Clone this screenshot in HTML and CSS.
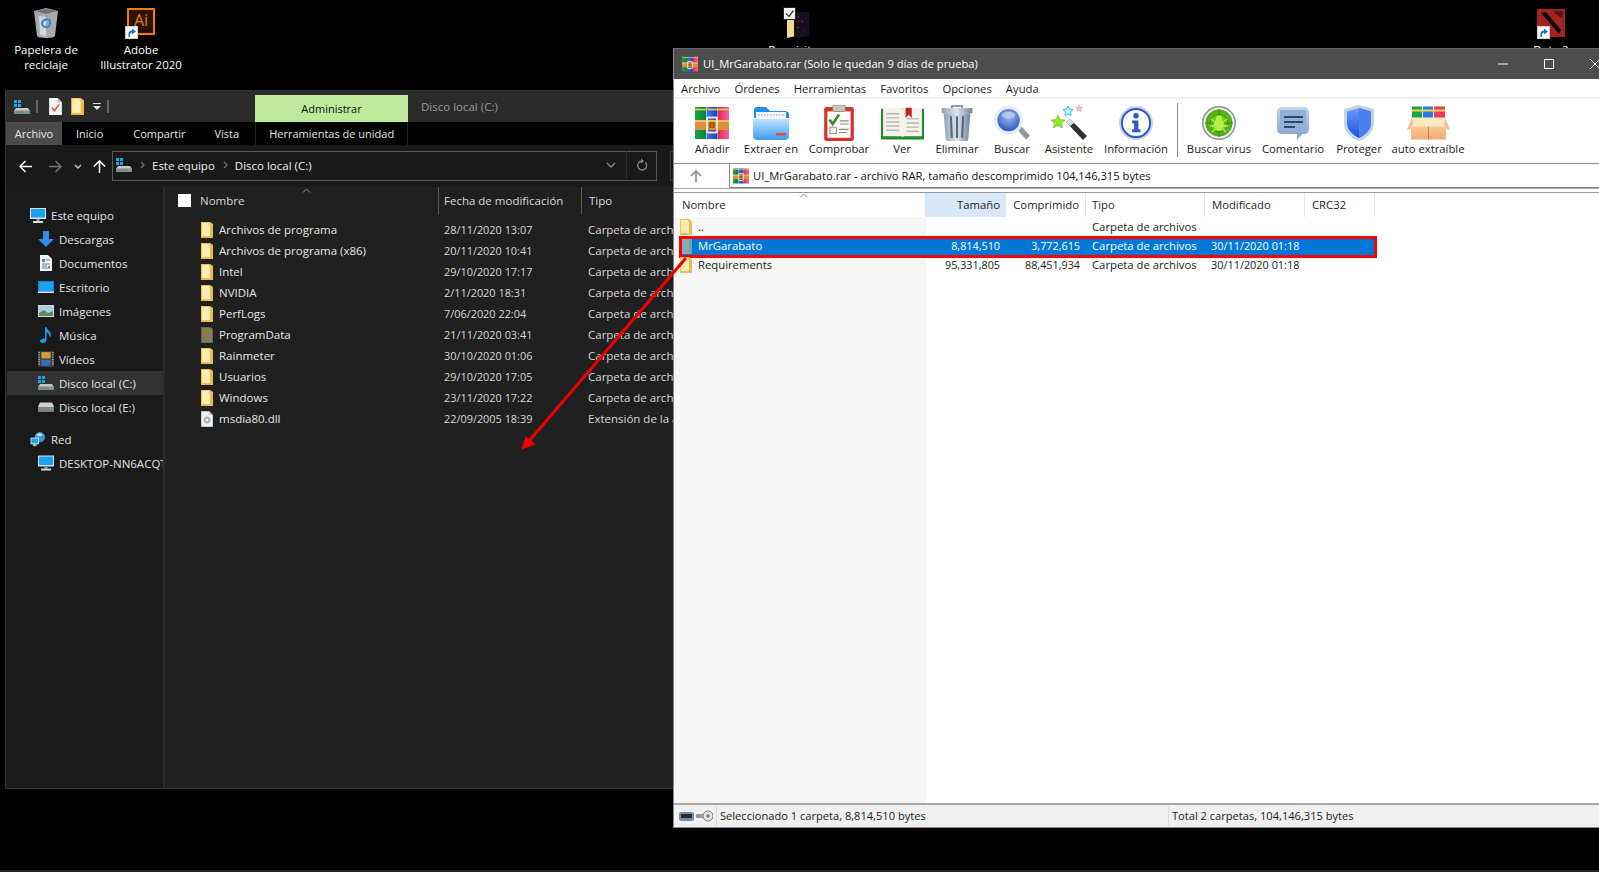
FILE: index.html
```html
<!DOCTYPE html>
<html lang="es">
<head>
<meta charset="utf-8">
<title>WinRAR y Explorador</title>
<link rel="stylesheet" href="styles.css">
</head>
<body>
<svg class="sprite" xmlns="http://www.w3.org/2000/svg">
  <defs>
    <linearGradient id="gFolder" x1="0" y1="0" x2="1" y2="0"><stop offset="0" stop-color="#ffe9a6"/><stop offset="1" stop-color="#fff1c2"/></linearGradient>
    <linearGradient id="gBlue" x1="0" y1="0" x2="0" y2="1"><stop offset="0" stop-color="#bfe3ff"/><stop offset="1" stop-color="#3b9bf0"/></linearGradient>
    <linearGradient id="gSteel" x1="0" y1="0" x2="1" y2="0"><stop offset="0" stop-color="#8fa3b8"/><stop offset=".5" stop-color="#dbe4ee"/><stop offset="1" stop-color="#6f8298"/></linearGradient>
    <radialGradient id="gLens" cx=".5" cy=".35" r=".7"><stop offset="0" stop-color="#a9bff0"/><stop offset="1" stop-color="#1f4fc0"/></radialGradient>
    <radialGradient id="gBug" cx=".5" cy=".5" r=".6"><stop offset="0" stop-color="#8be82a"/><stop offset="1" stop-color="#3f9a10"/></radialGradient>
    <linearGradient id="gShield" x1="0" y1="0" x2="0" y2="1"><stop offset="0" stop-color="#6d9cf5"/><stop offset="1" stop-color="#1c4fe8"/></linearGradient>
    <linearGradient id="gBubble" x1="0" y1="0" x2="0" y2="1"><stop offset="0" stop-color="#c3d6ec"/><stop offset="1" stop-color="#7f9fc8"/></linearGradient>
    <linearGradient id="gBox" x1="0" y1="0" x2="0" y2="1"><stop offset="0" stop-color="#fbc796"/><stop offset="1" stop-color="#f0a874"/></linearGradient>
    <linearGradient id="gGreen" x1="0" y1="0" x2="1" y2="0"><stop offset="0" stop-color="#14a34a"/><stop offset="1" stop-color="#0f7f39"/></linearGradient>
    <linearGradient id="gRoyal" x1="0" y1="0" x2="1" y2="0"><stop offset="0" stop-color="#3a78e8"/><stop offset="1" stop-color="#1f3fb8"/></linearGradient>
    <linearGradient id="gPink" x1="0" y1="0" x2="1" y2="0"><stop offset="0" stop-color="#e82a4a"/><stop offset="1" stop-color="#f560a8"/></linearGradient>
  </defs>
  <symbol id="i-folder" viewBox="0 0 12 16"><path d="M0 0H9L12 2V16H0Z" fill="#f0c354"/><path d="M1 1H8V3H11V14H1Z" fill="url(#gFolder)"/><path d="M9 3H12V16H1V14.500H9Z" fill="#e9bb4d"/></symbol>
  <symbol id="i-folder-dim" viewBox="0 0 12 16"><path d="M0 0H9L12 2V16H0Z" fill="#6e6745"/><path d="M1 1H11V15H1Z" fill="#857d58"/></symbol>
  <symbol id="i-folder-sel" viewBox="0 0 12 16"><rect width="12" height="16" fill="#83aeb0"/><rect x="9" y="2" width="3" height="14" fill="#76a1a6"/></symbol>
  <symbol id="i-dll" viewBox="0 0 12 16"><path d="M0 0H8L12 4V16H0Z" fill="#f2f2f2"/><path d="M8 0V4H12" fill="#bbb"/><circle cx="6" cy="9" r="3.500" fill="#aab4bf"/><circle cx="6" cy="9" r="1.300" fill="#eee"/><path d="M0 0H8L12 4V16H0Z" fill="none" stroke="#8a8a8a" stroke-width=".8"/></symbol>
  <symbol id="i-drive" viewBox="0 0 16 14"><rect x="0" y="0" width="3" height="3" fill="#19a7ec"/><rect x="4" y="0" width="3" height="3" fill="#19a7ec"/><rect x="0" y="4" width="3" height="3" fill="#19a7ec"/><rect x="4" y="4" width="3" height="3" fill="#19a7ec"/><path d="M2 8H14L16 11V14H0V11Z" fill="#c7c7c7"/><rect y="10.500" width="16" height="3.500" fill="#7f8a8a"/><rect x="11.500" y="11.500" width="2" height="1.500" fill="#35e05a"/></symbol>
  <symbol id="i-drive2" viewBox="0 0 16 9"><path d="M2 0H14L16 4V9H0V4Z" fill="#cfcfcf"/><rect y="4.500" width="16" height="4.500" fill="#7d8486"/><rect x="11.500" y="5.500" width="2" height="1.500" fill="#35e05a"/></symbol>
  <symbol id="i-pc" viewBox="0 0 16 15"><rect width="16" height="11" fill="#cfe4ee"/><rect x="1" y="1" width="14" height="8.500" fill="#19a3ef"/><rect x="6.500" y="11" width="3" height="2" fill="#8c97a0"/><rect x="3" y="13" width="10" height="2" fill="#d8dde0"/></symbol>
  <symbol id="i-down" viewBox="0 0 16 16"><path d="M5 0H11V8H16L8 16L0 8H5Z" fill="#2f8fe6"/></symbol>
  <symbol id="i-doc" viewBox="0 0 12 16"><path d="M0 0H8L12 4V16H0Z" fill="#f3f3f3"/><path d="M2 4H5V7H2Z" fill="#3a8fd0"/><path d="M6 5H10M2 9H10M2 11H7M2 13H10" stroke="#6a7a88" stroke-width="1"/><path d="M8 11H10V13H8Z" fill="#3a8fd0"/></symbol>
  <symbol id="i-props" viewBox="0 0 12 16"><path d="M0 0H8L12 4V16H0Z" fill="#f6f6f6"/><path d="M8 0V4H12" fill="#c4c4c4"/><path d="M2.500 9L5 12L9.500 6" fill="none" stroke="#e2502a" stroke-width="1.500"/></symbol>
  <symbol id="i-desk" viewBox="0 0 16 12"><rect width="16" height="12" fill="#0d7fe0"/><rect x="1" y="1" width="14" height="9" fill="#1aa1f0"/><rect y="10.500" width="16" height="1.500" fill="#cfe8f8"/></symbol>
  <symbol id="i-img" viewBox="0 0 16 12"><rect width="16" height="12" fill="#d6d6d6"/><rect x="1" y="1" width="14" height="10" fill="#a9cfe8"/><path d="M1 8L6 5L10 8L15 6V11H1Z" fill="#5e8a5e"/></symbol>
  <symbol id="i-music" viewBox="0 0 12 16"><path d="M5 0H6.500C7 3 11 4 11 8C11 9 10.500 10 10 10.500C10 8 8.500 6 6.500 5.500V13C6.500 15 4.500 16 2.500 16C1 16 0 15 0 14C0 12.500 2 11.500 5 11.500Z" fill="#1e9be8"/></symbol>
  <symbol id="i-video" viewBox="0 0 14 14"><rect width="14" height="14" fill="#3c3c3c"/><rect x="3" y="1" width="8" height="5.500" fill="#d2a23a"/><rect x="3" y="7.500" width="8" height="5.500" fill="#3d6cb0"/><path d="M1 1V13M13 1V13" stroke="#ddd" stroke-width="1" stroke-dasharray="1 1"/></symbol>
  <symbol id="i-net" viewBox="0 0 16 16"><circle cx="10" cy="5.500" r="5.500" fill="#3f94d6"/><path d="M6 3C8 1 11 1 13 3C12 5 8 5 6 3Z" fill="#cfe6f6"/><rect x="0" y="6" width="9" height="7" fill="#cfe4ee"/><rect x="1" y="7" width="7" height="5" fill="#19a3ef"/><rect x="2.500" y="13" width="4" height="2" fill="#b8c4cc"/></symbol>
  <symbol id="i-short" viewBox="0 0 13 13"><rect width="13" height="13" fill="#e9e9e9"/><rect x=".8" y=".8" width="11.400" height="11.400" fill="#fff" stroke="#b0b0b0" stroke-width=".6"/><path d="M3.500 11V7.500C3.500 5.500 5 4.500 7 4.500V2.500L11 5.500L7 8.500V6.500C5.500 6.500 5 7.500 5 11Z" fill="#1b6fc4"/></symbol>
  <symbol id="i-rar" viewBox="0 0 34 34"><path d="M0 1H11V33H0Z" fill="url(#gGreen)"/><path d="M11.500 1H22.500V33H11.500Z" fill="url(#gRoyal)"/><path d="M23 1H34V33H23Z" fill="url(#gPink)"/><path d="M0 3.500H34" stroke="#f3d34c" stroke-width="1.400"/><path d="M0 14H34V24H0Z" fill="#d9923c"/><path d="M0 14H34V16H0Z" fill="#f0c070"/><rect x="12" y="11.500" width="10" height="15" rx="1" fill="none" stroke="#f6e4c0" stroke-width="2"/><rect x="14" y="16" width="6" height="6" fill="#a85f1c"/></symbol>
  <symbol id="i-extract" viewBox="0 0 36 34"><path d="M1 4C1 2 2 1 4 1H13L17 5H32C34 5 36 6 36 8V12H1Z" fill="#1f8fe8"/><rect x="3" y="6" width="30" height="9" fill="#f2f7fb"/><path d="M5 9H31" stroke="#b3bcc5" stroke-width="1.500" stroke-dasharray="1.500 1.500"/><path d="M0 13H36V30C36 32 34 34 32 34H4C2 34 0 32 0 30Z" fill="url(#gBlue)"/><rect x="23" y="27" width="10" height="2.500" fill="#e64a3c"/></symbol>
  <symbol id="i-check" viewBox="0 0 28 34"><rect y="2" width="28" height="32" rx="2" fill="#d2332f"/><rect x="3" y="6" width="22" height="25" fill="#fbfbf4"/><rect x="8" y="0" width="12" height="6" rx="1.500" fill="#cfc7bd" stroke="#8a827a" stroke-width=".8"/><path d="M5 14L8 18L14 9" fill="none" stroke="#2c8f2e" stroke-width="2.500"/><rect x="5.500" y="21" width="6" height="6" fill="none" stroke="#999" stroke-width="1"/><path d="M15 15H23M15 18H23M14 23H23M14 26H21" stroke="#8a8a8a" stroke-width="1"/></symbol>
  <symbol id="i-book" viewBox="0 0 42 32"><path d="M0 2H42V32H0Z" fill="#1f8a32"/><path d="M2 1H20L21 3L22 1H40V29H22L21 30L20 29H2Z" fill="#f3f3ec"/><path d="M5 7H18M5 11H18M5 15H18M5 19H18M5 23H18M25 12H37M25 16H37M25 20H37M25 24H37" stroke="#b7b7ae" stroke-width="1.400"/><path d="M24 1H30V11L27 8L24 11Z" fill="#c22424"/></symbol>
  <symbol id="i-trash" viewBox="0 0 30 35"><path d="M10 3V1H20V3" fill="none" stroke="#6e8093" stroke-width="1.500"/><path d="M0 3H30V8H0Z" fill="url(#gSteel)"/><path d="M2 8H28L26 33C26 34 25 35 24 35H6C5 35 4 34 4 33Z" fill="url(#gSteel)"/><path d="M9 11L10 32M15 11V32M21 11L20 32" stroke="#55677a" stroke-width="2"/></symbol>
  <symbol id="i-search" viewBox="0 0 37 36"><path d="M23 24L33 35L37 31L27 20Z" fill="#8d98a4"/><circle cx="15" cy="15" r="15" fill="#e8eef6"/><circle cx="15" cy="15" r="11.500" fill="url(#gLens)"/><ellipse cx="15" cy="10" rx="7" ry="3.500" fill="#c6d4f4" fill-opacity=".7"/></symbol>
  <symbol id="i-wand" viewBox="0 0 36 36"><path d="M15 17L19 14L36 31L32 35Z" fill="#333"/><path d="M15 17L19 14L23 18L19 21Z" fill="#ddd"/><path d="M7 10L9 14.500L14 15L10.500 18L11.500 23L7 20.500L2.500 23L3.500 18L0 15L5 14.500Z" fill="#8fe82a" stroke="#5fb31a" stroke-width=".6"/><path d="M17 1L18.500 4L22 4.500L19.500 7L20 10.500L17 9L14 10.500L14.500 7L12 4.500L15.500 4Z" fill="#bff2fb" stroke="#2fb9e0" stroke-width="1"/><path d="M28 0L29 2L31.500 2.500L29.800 4L30 6.500L28 5.300L26 6.500L26.200 4L24.500 2.500L27 2Z" fill="#fbc3c3" stroke="#ea8a8a" stroke-width=".5"/></symbol>
  <symbol id="i-info" viewBox="0 0 35 35"><circle cx="17.500" cy="17.500" r="17.500" fill="#c7d3e8"/><circle cx="17.500" cy="17.500" r="14.500" fill="#fff" stroke="#2d5ac4" stroke-width="2"/><circle cx="17.500" cy="10" r="2.800" fill="#2d5ac4"/><path d="M13.500 15H20V24H22V27H13.500V24H15.500V18H13.500Z" fill="#2d5ac4"/></symbol>
  <symbol id="i-virus" viewBox="0 0 34 34"><circle cx="17" cy="17" r="17" fill="#8b9096"/><circle cx="17" cy="17" r="15.500" fill="#f0f0f0"/><circle cx="17" cy="17" r="13.500" fill="url(#gBug)"/><circle cx="17" cy="17" r="9" fill="none" stroke="#2f7f12" stroke-width=".8"/><path d="M17 3V31M3 17H31" stroke="#2f7f12" stroke-width=".7"/><ellipse cx="17" cy="19" rx="5" ry="6" fill="#b6f04a"/><circle cx="17" cy="12.500" r="3" fill="#b6f04a"/><path d="M9 13L13 16M25 13L21 16M8 20H12M26 20H22M10 26L13 23M24 26L21 23" stroke="#b6f04a" stroke-width="1.400"/></symbol>
  <symbol id="i-comment" viewBox="0 0 32 33"><path d="M5 0H27C30 0 32 2 32 5V22C32 25 30 27 27 27H25L20 33V27H5C2 27 0 25 0 22V5C0 2 2 0 5 0Z" fill="url(#gBubble)"/><path d="M3 3H29V24H3Z" fill="#8fb0d8"/><path d="M7 10H26M7 15H26M7 20H18" stroke="#33475f" stroke-width="1.800"/></symbol>
  <symbol id="i-shield" viewBox="0 0 30 36"><path d="M15 0L30 4V18C30 27 23 33 15 36C7 33 0 27 0 18V4Z" fill="#c5d2df"/><path d="M15 3L27 6.500V18C27 25 21 30 15 33C9 30 3 25 3 18V6.500Z" fill="url(#gShield)"/><path d="M15 3L27 6.500V18C27 25 21 30 15 33Z" fill="#4a80f2"/></symbol>
  <symbol id="i-box" viewBox="0 0 43 33"><path d="M5 0H15V14H5Z" fill="#1fa24a"/><path d="M16 0H26V14H16Z" fill="#2e79e0"/><path d="M27 0H38V14H27Z" fill="#ea3a5f"/><path d="M5 3H38V5H5Z" fill="#f3d34c"/><path d="M5 11H38L40 21H3Z" fill="#fbeac2"/><path d="M5 11L0 23H3L6 18Z" fill="#efbd90"/><path d="M38 11L43 23H40L37 18Z" fill="#efbd90"/><rect x="4" y="20" width="35" height="13" fill="url(#gBox)"/><path d="M21.500 20V33" stroke="#c57f4d"/></symbol>
  <symbol id="i-bin" viewBox="0 0 26 30"><path d="M1 3L13 0L25 3L22 28C22 29 18 30 13 30C8 30 4 29 4 28Z" fill="#a7a9ac"/><path d="M2 3L13 1L24 3L13 6Z" fill="#6e7074"/><path d="M6 8L13 9V28L7 27Z" fill="#d3d5d8"/><path d="M10 13C13 10 17 11 17 14C18 17 15 20 12 19C9 18 8 15 10 13Z" fill="none" stroke="#2b87d3" stroke-width="2"/></symbol>
  <symbol id="i-dota" viewBox="0 0 28 28"><rect width="28" height="28" fill="#a32321"/><path d="M4 4L9 3L24 21L22 25Z" fill="#0c0c0c"/><path d="M16 2L26 2L26 9L22 8ZM2 18L7 24L2 26Z" fill="#5e1513"/></symbol>
  <symbol id="i-pack" viewBox="0 0 26 31"><path d="M4 7H13V29L4 31Z" fill="#f5d98c"/><path d="M11 5H22L26 6V29L13 31L11 29Z" fill="#16101e"/><path d="M14 9L16 10M18 14L20 15M14 20L16 21M20 23L21 24M15 14L16 15" stroke="#5a3a8a" stroke-width="1"/><rect x=".5" y=".5" width="12" height="12" fill="#f4f4f4" stroke="#222" stroke-width="1"/><path d="M3 6.500L6 9.500L10.500 3.500" fill="none" stroke="#444" stroke-width="1.400"/></symbol>
  <symbol id="i-keys" viewBox="0 0 34 12"><rect x="0" y="2" width="15" height="9" rx="2" fill="#6f8fb0"/><rect x="2" y="4" width="11" height="4" fill="#2a2a2a"/><circle cx="29" cy="6" r="5" fill="#e4e4e4" stroke="#777"/><circle cx="29" cy="6" r="1.800" fill="#777"/><rect x="17" y="4" width="8" height="4" rx="1" fill="#9a9a9a"/></symbol>
</svg>

<div class="desk-icon desk-bin">
  <svg class="ic-bin"><use href="#i-bin"/></svg>
  <span>Papelera de reciclaje</span>
</div>
<div class="desk-icon desk-ai">
  <div class="ai-logo"><span>Ai</span></div>
  <svg class="ic-short"><use href="#i-short"/></svg>
  <span class="ai-label">Adobe Illustrator 2020</span>
</div>
<div class="desk-icon desk-pack">
  <svg class="ic-pack"><use href="#i-pack"/></svg>
  <span>Requisitos</span>
</div>
<div class="desk-icon desk-dota">
  <svg class="ic-dota"><use href="#i-dota"/></svg>
  <svg class="ic-short"><use href="#i-short"/></svg>
  <span>Dota 2</span>
</div>
<div class="desk-icon desk-hidden"><span>ADMINISTRAR</span></div>

<section class="window explorer">
  <header class="ex-title">
    <svg class="ic-16x14"><use href="#i-drive"/></svg>
    <i class="qa-sep"></i>
    <svg class="ic-doc"><use href="#i-props"/></svg>
    <svg class="ic-qf"><use href="#i-folder"/></svg>
    <svg class="qa-more" viewBox="0 0 8 7"><path d="M0 .5H8" stroke="#ddd"/><path d="M0 3H8L4 7Z" fill="#ddd"/></svg>
    <i class="qa-sep"></i>
    <div class="admin-tab">Administrar</div>
    <div class="ex-name">Disco local (C:)</div>
  </header>
  <nav class="ex-tabs">
    <span class="tab tab-file">Archivo</span>
    <span class="tab tab-home">Inicio</span>
    <span class="tab tab-share">Compartir</span>
    <span class="tab tab-view">Vista</span>
    <span class="tab tab-tools">Herramientas de unidad</span>
  </nav>
  <div class="ex-addr">
    <svg class="nav-btn nav-back" viewBox="0 0 14 14"><path d="M7 1L1 7L7 13M1 7H14" fill="none" stroke="#fff" stroke-width="1.600"/></svg>
    <svg class="nav-btn nav-fwd" viewBox="0 0 14 14"><path d="M7 1L13 7L7 13M13 7H0" fill="none" stroke="#777" stroke-width="1.600"/></svg>
    <svg class="nav-drop" viewBox="0 0 8 5"><path d="M1 1L4 4L7 1" fill="none" stroke="#ccc" stroke-width="1.400"/></svg>
    <svg class="nav-btn nav-up" viewBox="0 0 14 14"><path d="M1 7L7 1L13 7M7 1V14" fill="none" stroke="#fff" stroke-width="1.600"/></svg>
    <div class="addr-box">
      <svg class="ic-16x14"><use href="#i-drive"/></svg>
      <svg class="crumb-sep" viewBox="0 0 5 8"><path d="M1 1L4 4L1 7" fill="none" stroke="#777" stroke-width="1.200"/></svg>
      <span>Este equipo</span>
      <svg class="crumb-sep" viewBox="0 0 5 8"><path d="M1 1L4 4L1 7" fill="none" stroke="#777" stroke-width="1.200"/></svg>
      <span>Disco local (C:)</span>
      <svg class="addr-chev" viewBox="0 0 10 6"><path d="M1 1L5 5L9 1" fill="none" stroke="#888" stroke-width="1.300"/></svg>
      <i class="addr-div"></i>
      <svg class="addr-ref" viewBox="0 0 12 14"><path d="M9.500 4.500A4.500 4.500 0 1 1 6 3" fill="none" stroke="#888" stroke-width="1.300"/><path d="M5 0.500L8 3L5 5.500Z" fill="#888"/></svg>
    </div>
    <div class="search-box"></div>
  </div>
  <div class="ex-body">
    <aside class="ex-nav">
      <div class="n-row n-top"><svg class="ic-16x15"><use href="#i-pc"/></svg>Este equipo</div>
      <div class="n-row n-sub"><svg class="ic-16"><use href="#i-down"/></svg>Descargas</div>
      <div class="n-row n-sub"><svg class="ic-16"><use href="#i-doc"/></svg>Documentos</div>
      <div class="n-row n-sub"><svg class="ic-16"><use href="#i-desk"/></svg>Escritorio</div>
      <div class="n-row n-sub"><svg class="ic-16"><use href="#i-img"/></svg>Imágenes</div>
      <div class="n-row n-sub"><svg class="ic-16"><use href="#i-music"/></svg>Música</div>
      <div class="n-row n-sub"><svg class="ic-16"><use href="#i-video"/></svg>Vídeos</div>
      <div class="n-row n-sub n-active"><svg class="ic-16"><use href="#i-drive"/></svg>Disco local (C:)</div>
      <div class="n-row n-sub"><svg class="ic-16"><use href="#i-drive2"/></svg>Disco local (E:)</div>
      <div class="n-row n-top n-gap"><svg class="ic-16x15"><use href="#i-net"/></svg>Red</div>
      <div class="n-row n-sub"><svg class="ic-16"><use href="#i-pc"/></svg>DESKTOP-NN6ACQT</div>
    </aside>
    <div class="ex-list">
      <div class="ex-head">
        <div class="eh-name"><span class="eh-check"></span>Nombre<svg class="sort-up" viewBox="0 0 9 5"><path d="M1 4.500L4.500 1L8 4.500" fill="none" stroke="#9a9a9a"/></svg></div>
        <div class="eh-col">Fecha de modificación</div>
        <div class="eh-col eh-last">Tipo</div>
      </div>
      <div class="ex-row"><div class="er-name"><svg class="ic-file"><use href="#i-folder"/></svg>Archivos de programa</div><div class="er-date">28/11/2020 13:07</div><div class="er-type">Carpeta de archivos</div></div>
      <div class="ex-row"><div class="er-name"><svg class="ic-file"><use href="#i-folder"/></svg>Archivos de programa (x86)</div><div class="er-date">20/11/2020 10:41</div><div class="er-type">Carpeta de archivos</div></div>
      <div class="ex-row"><div class="er-name"><svg class="ic-file"><use href="#i-folder"/></svg>Intel</div><div class="er-date">29/10/2020 17:17</div><div class="er-type">Carpeta de archivos</div></div>
      <div class="ex-row"><div class="er-name"><svg class="ic-file"><use href="#i-folder"/></svg>NVIDIA</div><div class="er-date">2/11/2020 18:31</div><div class="er-type">Carpeta de archivos</div></div>
      <div class="ex-row"><div class="er-name"><svg class="ic-file"><use href="#i-folder"/></svg>PerfLogs</div><div class="er-date">7/06/2020 22:04</div><div class="er-type">Carpeta de archivos</div></div>
      <div class="ex-row"><div class="er-name"><svg class="ic-file"><use href="#i-folder-dim"/></svg>ProgramData</div><div class="er-date">21/11/2020 03:41</div><div class="er-type">Carpeta de archivos</div></div>
      <div class="ex-row"><div class="er-name"><svg class="ic-file"><use href="#i-folder"/></svg>Rainmeter</div><div class="er-date">30/10/2020 01:06</div><div class="er-type">Carpeta de archivos</div></div>
      <div class="ex-row"><div class="er-name"><svg class="ic-file"><use href="#i-folder"/></svg>Usuarios</div><div class="er-date">29/10/2020 17:05</div><div class="er-type">Carpeta de archivos</div></div>
      <div class="ex-row"><div class="er-name"><svg class="ic-file"><use href="#i-folder"/></svg>Windows</div><div class="er-date">23/11/2020 17:22</div><div class="er-type">Carpeta de archivos</div></div>
      <div class="ex-row"><div class="er-name"><svg class="ic-file"><use href="#i-dll"/></svg>msdia80.dll</div><div class="er-date">22/09/2005 18:39</div><div class="er-type">Extensión de la aplicación</div></div>
    </div>
  </div>
</section>

<section class="window winrar">
  <header class="wr-title">
    <svg class="ic-wr-logo"><use href="#i-rar"/></svg>
    <span class="wr-name">UI_MrGarabato.rar (Solo le quedan 9 días de prueba)</span>
    <div class="win-ctrl">
      <span class="ctrl"><svg viewBox="0 0 10 10"><path d="M0 5H10" stroke="#fff"/></svg></span>
      <span class="ctrl"><svg viewBox="0 0 10 10"><rect x=".5" y=".5" width="9" height="9" fill="none" stroke="#fff"/></svg></span>
      <span class="ctrl"><svg viewBox="0 0 10 10"><path d="M0 0L10 10M10 0L0 10" stroke="#fff"/></svg></span>
    </div>
  </header>
  <nav class="wr-menu">
    <span>Archivo</span><span>Órdenes</span><span>Herramientas</span><span>Favoritos</span><span>Opciones</span><span>Ayuda</span>
  </nav>
  <div class="wr-tools">
    <div class="tool"><svg class="t-ic t-34"><use href="#i-rar"/></svg><span>Añadir</span></div>
    <div class="tool"><svg class="t-ic"><use href="#i-extract"/></svg><span>Extraer en</span></div>
    <div class="tool"><svg class="t-ic"><use href="#i-check"/></svg><span>Comprobar</span></div>
    <div class="tool"><svg class="t-ic t-wide"><use href="#i-book"/></svg><span>Ver</span></div>
    <div class="tool"><svg class="t-ic"><use href="#i-trash"/></svg><span>Eliminar</span></div>
    <div class="tool"><svg class="t-ic"><use href="#i-search"/></svg><span>Buscar</span></div>
    <div class="tool"><svg class="t-ic"><use href="#i-wand"/></svg><span>Asistente</span></div>
    <div class="tool"><svg class="t-ic t-34"><use href="#i-info"/></svg><span>Información</span></div>
    <i class="tool-sep"></i>
    <div class="tool"><svg class="t-ic t-34"><use href="#i-virus"/></svg><span>Buscar virus</span></div>
    <div class="tool"><svg class="t-ic t-32"><use href="#i-comment"/></svg><span>Comentario</span></div>
    <div class="tool"><svg class="t-ic"><use href="#i-shield"/></svg><span>Proteger</span></div>
    <div class="tool"><svg class="t-ic t-wide"><use href="#i-box"/></svg><span>auto extraíble</span></div>
  </div>
  <div class="wr-addr">
    <svg class="wr-up" viewBox="0 0 12 12"><path d="M1 6L6 1L11 6M6 1V12" fill="none" stroke="#8a8a8a" stroke-width="1.600"/></svg>
    <div class="wr-path"><svg class="ic-wr-logo"><use href="#i-rar"/></svg>UI_MrGarabato.rar - archivo RAR, tamaño descomprimido 104,146,315 bytes</div>
  </div>
  <div class="wr-list">
    <div class="wr-head">
      <div class="wh wh-name">Nombre<svg class="sort-up" viewBox="0 0 9 5"><path d="M1 4.500L4.500 1L8 4.500" fill="none" stroke="#888"/></svg></div>
      <div class="wh wh-size">Tamaño</div>
      <div class="wh wh-comp">Comprimido</div>
      <div class="wh">Tipo</div>
      <div class="wh wh-mod">Modificado</div>
      <div class="wh wh-mod">CRC32</div>
    </div>
    <div class="wr-row"><div class="wc wc-name"><svg class="ic-file"><use href="#i-folder"/></svg>..</div><div class="wc wc-num"></div><div class="wc wc-num"></div><div class="wc">Carpeta de archivos</div><div class="wc wc-date"></div><div class="wc"></div></div>
    <div class="wr-row wr-sel"><div class="wc wc-name"><svg class="ic-file"><use href="#i-folder-sel"/></svg>MrGarabato</div><div class="wc wc-num">8,814,510</div><div class="wc wc-num">3,772,615</div><div class="wc">Carpeta de archivos</div><div class="wc wc-date">30/11/2020 01:18</div><div class="wc"></div></div>
    <div class="wr-row"><div class="wc wc-name"><svg class="ic-file"><use href="#i-folder"/></svg>Requirements</div><div class="wc wc-num">95,331,805</div><div class="wc wc-num">88,451,934</div><div class="wc">Carpeta de archivos</div><div class="wc wc-date">30/11/2020 01:18</div><div class="wc"></div></div>
  </div>
  <footer class="wr-status">
    <svg class="ic-keys"><use href="#i-keys"/></svg>
    <div class="st-left">Seleccionado 1 carpeta, 8,814,510 bytes</div>
    <div class="st-right">Total 2 carpetas, 104,146,315 bytes</div>
  </footer>
</section>

<svg class="arrow" viewBox="0 0 1599 872" xmlns="http://www.w3.org/2000/svg">
  <path d="M686 258L529 441" stroke="#f20000" stroke-width="3" fill="none"/>
  <path d="M522 449L526 437L535 444Z" fill="#f20000" stroke="#f20000"/>
</svg>
<div class="taskbar"></div>
</body>
</html>
```

FILE: styles.css
```css
* { box-sizing: border-box; }
html, body { margin: 0; height: 100%; }
body {
  position: relative;
  width: 1599px;
  height: 872px;
  overflow: hidden;
  background: #000;
  font-family: "Open Sans", "Noto Sans", sans-serif;
  font-size: 11.5px;
  color: #111;
}
.sprite { position: absolute; width: 0; height: 0; }
svg { display: block; flex: none; }

/* desktop icons */
.desk-icon {
  position: absolute;
  width: 96px;
  color: #fff;
  text-align: center;
  line-height: 15px;
}
.desk-icon span { display: block; }
.desk-bin { left: -2px; top: 8px; }
.desk-bin span { position: absolute; left: 12px; width: 72px; top: 34px; }
.ic-bin { width: 26px; height: 30px; margin: 0 auto; }
.desk-ai { left: 93px; top: 8px; }
.ai-logo {
  width: 28px; height: 27px; margin: 0 auto;
  border: 2px solid #f47a00; background: #2a1200;
  color: #f47a00; font-size: 16px; line-height: 21px;
}
.desk-ai .ai-label { position: absolute; left: 4px; width: 88px; top: 34px; }
.ic-short { position: absolute; width: 13px; height: 13px; left: 32px; top: 18px; }
.desk-pack { left: 748px; top: 7px; }
.ic-pack { width: 26px; height: 31px; margin: 0 auto; }
.desk-pack span { position: absolute; left: 0; width: 96px; top: 35px; }
.desk-dota { left: 1503px; top: 9px; }
.ic-dota { width: 28px; height: 28px; margin: 0 auto; }
.desk-dota .ic-short { left: 34px; top: 17px; }
.desk-dota > span { position: absolute; left: 0; width: 96px; top: 33px; }
.desk-hidden { left: 0; top: 778px; font-size: 9.5px; }

/* shared windows */
.window { position: absolute; overflow: hidden; display: flex; flex-direction: column; }

/* explorer */
.explorer {
  left: 5px; top: 90px; width: 690px; height: 699px;
  background: #202020; border: 1px solid #333; color: #e6e6e6;
}
.ex-title {
  height: 31px; flex: none; background: #2b2b2b;
  display: flex; align-items: center; padding-left: 8px;
}
.ic-16x14 { width: 16px; height: 14px; }
.ic-16x15 { width: 16px; height: 15px; }
.qa-sep { width: 2px; height: 13px; margin: 0 6px; background: #666; }
.ic-doc { width: 13px; height: 17px; margin-left: 5px; }
.ic-qf { width: 13px; height: 17px; margin-left: 9px; }
.qa-more { width: 8px; height: 7px; margin-left: 9px; }
.admin-tab {
  width: 153px; height: 27px; margin: 4px 0 0 140px;
  background: #bfe99c; color: #111; text-align: center; line-height: 28px; font-size: 11px;
}
.ex-name { margin-left: 13px; color: #9c9c9c; }
.ex-tabs { height: 23px; flex: none; background: #000; display: flex; align-items: center; font-size: 11px; }
.tab { color: #e6e6e6; }
.tab-file { width: 56px; height: 23px; background: #4b4b4b; text-align: center; line-height: 23px; }
.tab-home { margin-left: 14px; }
.tab-share { margin-left: 30px; }
.tab-view { margin-left: 29px; }
.tab-tools {
  margin-left: 16px; width: 153px; height: 23px; text-align: center; line-height: 23px;
  border-left: 1px solid #222; border-right: 1px solid #222;
}
.ex-addr { height: 42px; flex: none; background: #191919; display: flex; align-items: center; padding: 0 0 0 13px; }
.nav-btn { width: 13px; height: 13px; }
.nav-fwd { margin-left: 17px; }
.nav-drop { width: 8px; height: 5px; margin-left: 12px; }
.nav-up { margin-left: 11px; }
.addr-box {
  width: 545px; height: 30px; margin-left: 6px; flex: none;
  border: 1px solid #5a5a5a; display: flex; align-items: center; padding: 0 0 2px 3px;
  color: #eee;
}
.crumb-sep { width: 5px; height: 8px; margin: 0 7px 0 8px; }
.addr-chev { width: 10px; height: 6px; margin-left: auto; }
.addr-div { width: 1px; height: 28px; margin-left: 10px; background: #2e2e2e; }
.addr-ref { width: 12px; height: 14px; margin: 0 8px 0 9px; }
.search-box { width: 40px; height: 30px; margin-left: 13px; flex: none; border: 1px solid #3a3a3a; }
.ex-body { flex: 1; display: flex; min-height: 0; }
.ex-nav {
  width: 159px; flex: none; background: #1a1a1a; border-right: 2px solid #2b2b2b;
  padding: 16px 0 0 1px; overflow: hidden;
}
.n-row { height: 24px; display: flex; align-items: center; gap: 5px; white-space: nowrap; color: #e2e2e2; }
.n-top { padding-left: 23px; }
.n-sub { padding-left: 31px; }
.n-active { background: #333; }
.n-gap { margin-top: 8px; }
.ic-16 { width: 16px; height: 16px; }
.ex-list { flex: 1; }
.ex-head {
  display: grid; grid-template-columns: 273px 143px 1fr;
  height: 27px; margin-bottom: 5px; align-items: center; color: #d8d8d8;
}
.eh-name { position: relative; display: flex; align-items: center; padding-left: 13px; height: 100%; }
.eh-check { width: 13px; height: 13px; background: #fff; margin-right: 9px; }
.sort-up { position: absolute; width: 9px; height: 5px; left: 137px; top: 1px; }
.eh-col { border-left: 1px solid #5a5a5a; height: 100%; padding-left: 5px; line-height: 27px; }
.eh-last { padding-left: 7px; }
.ex-row {
  display: grid; grid-template-columns: 273px 143px 1fr;
  height: 21px; align-items: center; white-space: nowrap; color: #d8d8d8;
}
.er-name { display: flex; align-items: center; gap: 6px; padding-left: 36px; color: #e6e6e6; }
.ic-file { width: 12px; height: 16px; }
.er-date { padding-left: 6px; font-size: 10.9px; }
.er-type { padding-left: 7px; }

/* winrar */
.winrar {
  left: 673px; top: 48px; width: 946px; height: 780px;
  background: #fff; border: 1px solid #888; border-top-color: #666;
  font-size: 11.3px;
}
.wr-title {
  height: 30px; flex: none; background: #4d4d4d; color: #fff;
  display: flex; align-items: center; padding: 0 0 1px 8px; font-size: 11.2px;
}
.ic-wr-logo { width: 16px; height: 16px; }
.wr-name { margin-left: 5px; }
.win-ctrl { margin-left: auto; display: flex; }
.ctrl { width: 46px; height: 30px; display: flex; align-items: center; justify-content: center; }
.ctrl svg { width: 10px; height: 10px; }
.wr-menu { height: 18px; flex: none; display: flex; align-items: center; padding-left: 7px; gap: 14px; color: #1a1a1a; }
.wr-tools {
  height: 67px; flex: none; border-top: 2px solid #f0f0f0; border-bottom: 1px solid #8a8a8a;
  padding-left: 9px; display: grid; grid-template-columns: 58px 60px 76px 50px 60px 50px 64px 70px 12px 72px 76px 56px 82px;
  color: #1a1a1a;
}
.tool { display: flex; flex-direction: column; align-items: center; padding-top: 6px; white-space: nowrap; }
.t-ic { width: 36px; height: 36px; }
.t-wide { width: 43px; }
.t-34 { width: 34px; height: 34px; margin: 1px 0; }
.t-32 { width: 32px; height: 33px; margin: 2px 0 1px; }
.tool span { line-height: 16px; }
.tool-sep { width: 1px; height: 54px; margin: 4px 0 0 6px; background: #8a8a8a; }
.wr-addr { height: 25px; flex: none; display: flex; align-items: stretch; padding-left: 16px; border-bottom: 1px solid #aaa; }
.wr-up { width: 12px; height: 12px; align-self: center; }
.wr-path {
  flex: 1; margin-left: 27px; border-left: 1px solid #888; border-bottom: 1px solid #888;
  display: flex; align-items: center; gap: 4px; padding-left: 3px; white-space: nowrap; color: #111;
  font-size: 11.2px;
}
.wr-list {
  flex: 1; margin-top: 3px; border-top: 1px solid #999;
  background: linear-gradient(90deg, #f7f7f7 252px, #fff 252px) 0 24px no-repeat;
}
.wr-head, .wr-row {
  display: grid; grid-template-columns: 245px 81px 80px 119px 100px 70px;
  width: 695px; margin-left: 6px; white-space: nowrap;
}
.wr-head { height: 24px; position: relative; color: #1f1f1f; background: #fff; }
.wh { border-right: 1px solid #e5e5e5; padding-left: 6px; line-height: 24px; }
.wh-name { padding-left: 2px; position: relative; border-right: 0; }
.wh-name .sort-up { left: 119px; top: 0; }
.wh-size { background: #d9e8f6; text-align: right; padding: 0 6px 0 0; border-right: 0; }
.wh-comp { text-align: right; padding-right: 6px; }
.wh-mod { padding-left: 7px; }
.wr-row { height: 19px; position: relative; align-items: center; color: #1a1a1a; }
.wc { padding-left: 6px; }
.wc-name { display: flex; align-items: center; gap: 6px; padding-left: 0; }
.wc-num { text-align: right; padding-right: 6px; padding-left: 0; font-size: 10.8px; }
.wc-date { font-size: 10.9px; }
.wr-sel { background: #0078d7; color: #fff; }
.wr-sel::after {
  content: ""; position: absolute; left: -1px; right: -2px; top: 0; bottom: -3px;
  border: 3px solid #f00;
}
.wr-status {
  height: 24px; flex: none; background: #f0f0f0; border-top: 2px solid #a8a8a8;
  display: flex; align-items: center; padding-left: 5px; color: #1a1a1a; white-space: nowrap;
  font-size: 11.1px;
}
.ic-keys { width: 34px; height: 12px; }
.st-left { width: 452px; margin-left: 3px; padding-left: 3px; border-left: 1px solid #ddd; line-height: 20px; }
.st-right { padding-left: 3px; border-left: 1px solid #ddd; line-height: 20px; }

/* overlay */
.arrow { position: absolute; left: 0; top: 0; width: 1599px; height: 872px; pointer-events: none; }
.taskbar { position: absolute; left: 0; right: 0; bottom: 0; height: 2px; background: #262626; }
```
